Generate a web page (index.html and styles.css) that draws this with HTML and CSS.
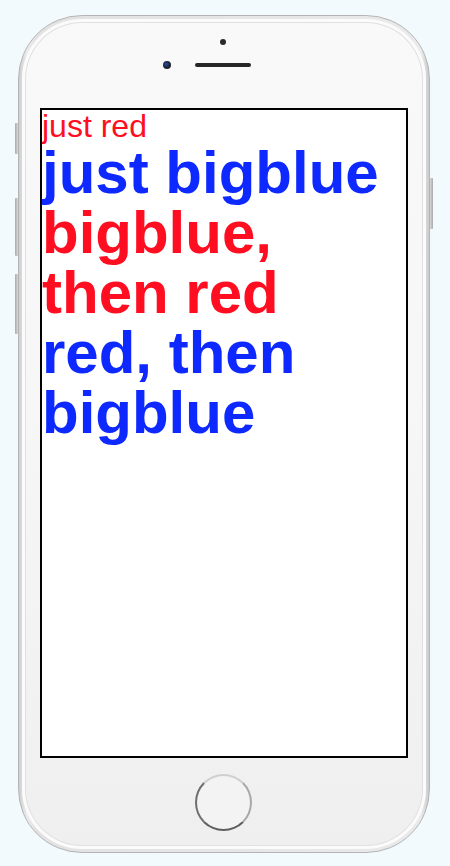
FILE: index.html
```html
<!DOCTYPE html>
<html>
<head>
<meta charset="utf-8">
<link rel="stylesheet" href="styles.css">
</head>
<body>
<div class="phone">
  <span class="side-btn mute"></span>
  <span class="side-btn vol-up"></span>
  <span class="side-btn vol-down"></span>
  <span class="side-btn power"></span>
  <div class="face">
    <div class="bezel-top">
      <span class="sensor"></span>
      <div class="cam-row">
        <span class="camera"></span>
        <span class="earpiece"></span>
      </div>
    </div>
    <div class="screen">
      <div class="small-red">just red</div>
      <div class="big blue">just bigblue</div>
      <div class="big red">bigblue, then red</div>
      <div class="big blue">red, then bigblue</div>
    </div>
    <div class="bezel-bottom">
      <span class="home"></span>
    </div>
  </div>
</div>
</body>
</html>
```

FILE: styles.css
```css
html, body {
  margin: 0;
  padding: 0;
  background: #f2fafe;
}

body {
  width: 450px;
  height: 866px;
  overflow: hidden;
  font-family: "Liberation Sans", Arial, sans-serif;
}

.phone {
  position: relative;
  margin: 15px 0 0 18px;
  width: 412px;
  height: 838px;
  box-sizing: border-box;
  border-radius: 64px;
  border: 1px solid #b5b5b5;
  background: linear-gradient(90deg, #cfcfcf 0%, #ececec 2%, #e2e2e2 4%, #e9e9e9 96%, #ececec 98%, #cbcbcb 100%);
  padding: 3px;
}

.side-btn {
  position: absolute;
  width: 3px;
  background: linear-gradient(90deg, #a9a9a9, #d8d8d8);
  border-radius: 1px;
}
.mute { left: -4px; top: 107px; height: 31px; }
.vol-up { left: -4px; top: 182px; height: 58px; }
.vol-down { left: -4px; top: 258px; height: 60px; }
.power { right: -4px; top: 162px; height: 51px; background: linear-gradient(90deg, #d8d8d8, #a9a9a9); }

.face {
  height: 100%;
  box-sizing: border-box;
  border-radius: 60px;
  background: linear-gradient(180deg, #f9f9f9 0%, #f6f6f6 50%, #efefef 100%);
  box-shadow: inset 0 0 0 3px #fbfbfb, inset 0 0 0 4px #e0e0e0;
  display: flex;
  flex-direction: column;
  align-items: center;
}

.bezel-top {
  height: 89px;
  width: 100%;
  display: flex;
  flex-direction: column;
  align-items: center;
  padding-top: 20px;
  box-sizing: border-box;
}

.sensor {
  width: 6px;
  height: 6px;
  border-radius: 50%;
  background: #2a2a2a;
  margin-left: -3px;
}

.cam-row {
  display: flex;
  align-items: center;
  gap: 24px;
  margin-top: 16px;
  padding-right: 34px;
}

.camera {
  width: 8px;
  height: 8px;
  border-radius: 50%;
  background: radial-gradient(circle at 40% 40%, #2b4fa8 0%, #1a2440 45%, #222 70%);
}

.earpiece {
  width: 56px;
  height: 4px;
  border-radius: 2px;
  background: #262626;
}

.screen {
  width: 368px;
  height: 650px;
  box-sizing: border-box;
  border: 2px solid #000;
  background: #fff;
  overflow: hidden;
}

.small-red {
  color: #ff0d21;
  font-size: 32px;
  line-height: 34px;
  margin-top: -1px;
}

.big {
  font-size: 60px;
  line-height: 60px;
  font-weight: bold;
}

.blue { color: #0d29ff; }
.red { color: #ff0d21; }

.bezel-bottom {
  flex: 1;
  display: flex;
  justify-content: center;
  align-items: flex-start;
  padding-top: 16px;
}

.home {
  width: 57px;
  height: 57px;
  box-sizing: border-box;
  border-radius: 50%;
  border: 2px solid #8a8a8a;
  border-top-color: #cfcfcf;
  border-left-color: #6e6e6e;
  border-right-color: #a8a8a8;
  border-bottom-color: #5e5e5e;
  background: #f3f3f3;
  margin-left: -1px;
}
```
